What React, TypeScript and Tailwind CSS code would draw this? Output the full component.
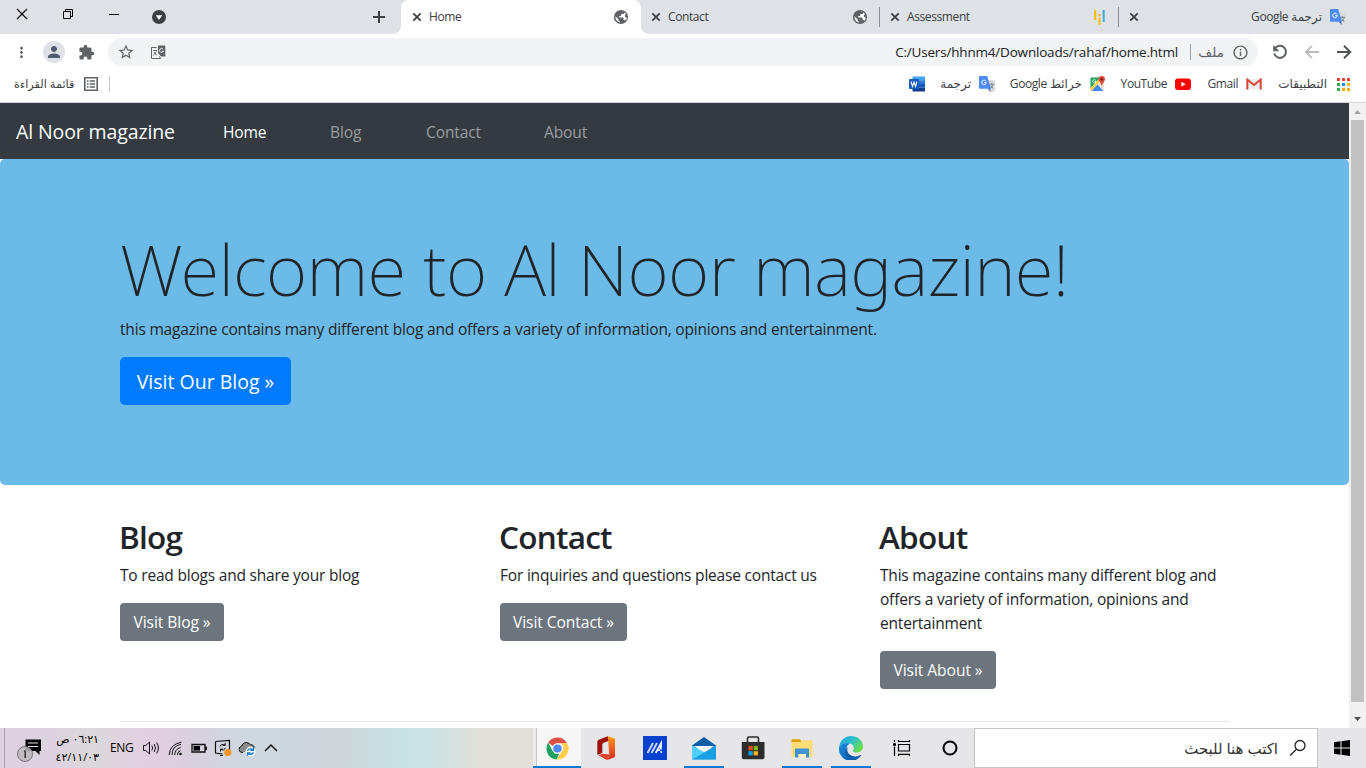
import type { ReactNode } from "react";
import { MdExtension, MdInfoOutline, MdMoreVert, MdPerson, MdStarBorder } from "react-icons/md";

/* ---------- small drawings ---------- */

const CloseX = () => (
  <svg width="10" height="10" viewBox="0 0 10 10" className="shrink-0">
    <path d="M1.3 1.3 8.7 8.7M8.7 1.3 1.3 8.7" stroke="#3c4043" strokeWidth="1.8" />
  </svg>
);

const Globe = () => (
  <svg width="16" height="16" viewBox="0 0 16 16" className="shrink-0">
    <circle cx="8" cy="8" r="7.100" fill="#5f6368" />
    <path
      d="M8.800 2.400c1 .1 1.900.4 2.700 1-.2 1.100-.9 1.600-2 1.700H8.300v1.200c0 .5-.3.800-.8.800H6.300v1.300h3.500c.5 0 .8.300.8.800v1.700h.8c.6 0 1.100.3 1.300.8.600-.8 1-1.800 1.100-2.800l-2-1.500.3-1.700 1-.6A5.600 5.600 0 0 0 8.800 2.400zM2.400 7.300l3.300 3.200v.7c0 .7.600 1.300 1.300 1.300v1a5.600 5.600 0 0 1-4.600-6.200z"
      fill="#fff"
    />
  </svg>
);

const TranslateIcon = () => (
  <svg width="16" height="16" viewBox="0 0 16 16" className="shrink-0">
    <path d="M6 4h9.2c.5 0 .8.3.8.8v10.4c0 .5-.3.8-.8.8H10z" fill="#dcdcdc" />
    <path d="M8.6 12.6 12 16l-1.2-4z" fill="#3a5bc7" />
    <path d="M.8 0h7.4L12 12.8H.8c-.5 0-.8-.3-.8-.8V.8C0 .3.300 0 .8 0z" fill="#4c8bf5" />
    <path d="M7 5.300A2.300 2.300 0 1 0 7.300 6.700H5.200" stroke="#fff" strokeWidth="1" fill="none" />
    <path d="M10.800 8.300h4.200M12.800 7.200v1.200M14.200 8.500c-.3 1.700-1.500 3-2.600 3.700M11.700 9.500c.5 1.300 1.600 2.400 2.700 3" stroke="#6b7d86" strokeWidth=".9" fill="none" />
  </svg>
);

const WordIcon = () => (
  <svg width="16" height="16" viewBox="0 0 16 16" className="shrink-0">
    <path d="M4 .5h11.500a.5.5 0 0 1 .5.5v3.500H3.500V1z" fill="#41a5ee" />
    <path d="M3.500 4.300H16V8H3.500z" fill="#2b7cd3" />
    <path d="M3.500 8H16v3.700H3.500z" fill="#185abd" />
    <path d="M3.500 11.700H16V15a.5.5 0 0 1-.5.5H4a.5.5 0 0 1-.5-.5z" fill="#103f91" />
    <rect y="3" width="10" height="10" rx=".8" fill="#185abd" />
    <path d="m2 5.500 1.500 5L5 6l1.500 4.500 1.500-5" stroke="#fff" strokeWidth="1.100" fill="none" />
  </svg>
);

const MapsIcon = () => (
  <svg width="16" height="16" viewBox="0 0 16 16" className="shrink-0">
    <rect x=".5" y="1.500" width="13.500" height="13.500" rx="1" fill="#e8e4da" />
    <path d="M.5 2.500a1 1 0 0 1 1-1H11L.5 12.500z" fill="#1fa463" />
    <path d="m1.500 15 6-6.500 5.800 6.500z" fill="#4285f4" />
    <path d="m.5 12 9-10 1.500 2-9.500 11c-.6 0-1-.4-1-1z" fill="#fcd04b" />
    <path d="M5.800 4.500A1.700 1.700 0 1 0 6 5.500H4.500" stroke="#fff" strokeWidth=".8" fill="none" />
    <path d="M11.800 0a3.200 3.200 0 0 1 3.200 3.200c0 2.300-2.700 3.600-3.200 7.300-.5-3.700-3.200-5-3.200-7.300A3.200 3.200 0 0 1 11.800 0z" fill="#dd4b3e" />
    <circle cx="11.800" cy="3.200" r="1.200" fill="#811411" />
  </svg>
);

const YouTubeIcon = () => (
  <svg width="16" height="16" viewBox="0 0 16 16" className="shrink-0">
    <rect y="2.500" width="16" height="11.500" rx="3" fill="#f00" />
    <path d="m6.400 5.800 4.200 2.450-4.200 2.450z" fill="#fff" />
  </svg>
);

const GmailIcon = () => (
  <svg width="16" height="16" viewBox="0 0 16 16" className="shrink-0">
    <path d="M1 3h14v10.500H1z" fill="#eee" />
    <path d="M1.300 13.500V3.500L8 9l6.700-5.500v10" stroke="#db4437" strokeWidth="2" fill="none" />
  </svg>
);

const AppsGrid = () => {
  const colors = ["#ea4335", "#ea4335", "#ea4335", "#34a853", "#1a8cff", "#fbbc04", "#34a853", "#fbab04", "#fbab04"];
  return (
    <div className="ml-[2px] grid h-[13px] w-[13px] shrink-0 grid-cols-3 gap-[2px]">
      {colors.map((c, i) => (
        <span key={i} style={{ backgroundColor: c }} />
      ))}
    </div>
  );
};

const BarsIcon = () => (
  <svg width="11" height="16" viewBox="0 0 11 16" className="shrink-0">
    <path d="M1.200 1v10M5.500 8.500V16" stroke="#fbbc04" strokeWidth="2" />
    <path d="M5.500 5v2.200" stroke="#f9ab00" strokeWidth="2" />
    <path d="M9.700 1v12" stroke="#3aa9e0" strokeWidth="2" />
  </svg>
);

/* ---------- browser tab strip ---------- */

const tabText = "text-[12px] leading-[16px] tracking-[-0.033em] text-[#3c4043]";

function TabStrip() {
  return (
    <div className="flex h-[34px] bg-white">
      <div className="flex w-[401px] rounded-br-[8px] bg-[#dee1e6]">
        <svg width="401" height="34" viewBox="0 0 401 34">
          <path d="M17 9l10 10M27 9 17 19" stroke="#000" strokeWidth="1.100" />
          <path d="M63.500 11.500h7v7h-7zM65.500 11.500v-2h7v7h-2" stroke="#000" fill="none" />
          <path d="M109 14.500h10" stroke="#000" />
          <circle cx="159" cy="17" r="7" fill="#3c4043" />
          <path d="m155.800 15.200h6.400L159 20z" fill="#fff" />
          <path d="M373 17h12M379 11v12" stroke="#3c4043" strokeWidth="2" />
        </svg>
      </div>
      <div className="w-[240px] bg-[linear-gradient(#dee1e6_50%,white_50%)]">
        <div className="flex h-full items-center rounded-t-[8px] bg-white pr-[12px] pl-[11px]">
          <CloseX />
          <span className={`ml-[7px] flex-1 ${tabText}`}>Home</span>
          <Globe />
        </div>
      </div>
      <div className="flex flex-1 rounded-bl-[8px] bg-[#dee1e6]">
        <div className="flex w-[238px] items-center pr-[11px] pl-[10px]">
          <CloseX />
          <span className={`ml-[7px] flex-1 ${tabText}`}>Contact</span>
          <Globe />
        </div>
        <div className="my-[7px] w-px bg-[#8b8e93]" />
        <div className="flex w-[238px] items-center pr-[13px] pl-[10px]">
          <CloseX />
          <span className={`ml-[7px] flex-1 ${tabText}`}>Assessment</span>
          <BarsIcon />
        </div>
        <div className="my-[7px] w-px bg-[#8b8e93]" />
        <div className="flex w-[227px] items-center pl-[10px]">
          <CloseX />
          <span dir="rtl" className={`mr-[8px] flex-1 ${tabText}`}>
            ترجمة Google
          </span>
          <TranslateIcon />
        </div>
      </div>
    </div>
  );
}

/* ---------- toolbar ---------- */

function Toolbar() {
  return (
    <div className="flex h-[36px] items-center bg-white pr-[14px] pl-[13px] text-[#5f6368]">
      <MdMoreVert size={17} />
      <div className="ml-[13px] flex size-[22px] items-center justify-center rounded-full bg-[#dee1e6]">
        <MdPerson size={18} color="#4f5b70" />
      </div>
      <MdExtension size={17} className="ml-[13px]" />
      <div className="ml-[13px] flex h-[28px] w-[1150px] items-center rounded-full bg-[#f1f3f4] pr-[9px] pl-[9px]">
        <MdStarBorder size={18} />
        <svg width="16" height="16" viewBox="0 0 16 16" className="ml-[15px]">
          <path d="M6.500 3.500h-5v11h9l-1-2" fill="none" stroke="#5f6368" />
          <path d="M3.200 6.500h4M3.400 11.500l3.200-4M4 8l2.800 3.500" stroke="#5f6368" strokeWidth=".9" />
          <path d="M8 1.500h6.500a.8.800 0 0 1 .8.800V12.500H11L8 9z" fill="#5f6368" />
          <path d="M13 5.200a2 2 0 1 0 .3 2H11.800" stroke="#f1f3f4" fill="none" />
        </svg>
        <span className="flex-1 text-right text-[13.500px] leading-[18px] tracking-[-0.014em] text-[#202124]">
          C:/Users/hhnm4/Downloads/rahaf/home.html
        </span>
        <div className="ml-[12px] h-[16px] w-px bg-[#9aa0a6]" />
        <span className="mr-[8px] w-[33px] text-right text-[13.500px] leading-[18px]">ملف</span>
        <MdInfoOutline size={17} />
      </div>
      <svg width="16" height="16" viewBox="0 0 16 16" className="ml-[14px]" fill="none" stroke="#5f6368" strokeWidth="2">
        <path d="M3.200 4.200A6 6 0 1 1 2.200 9.500" />
        <path d="M1.200 1v6.200h6.200z" fill="#5f6368" stroke="none" />
      </svg>
      <svg width="16" height="16" viewBox="0 0 16 16" className="ml-[16px]" fill="none" stroke="#babcbe" strokeWidth="1.800">
        <path d="M15 8H2.500M8 1.800 1.800 8 8 14.200" />
      </svg>
      <svg width="16" height="16" viewBox="0 0 16 16" className="ml-[16px]" fill="none" stroke="#4f5357" strokeWidth="2">
        <path d="M1 8h12.500M8 1.800 14.200 8 8 14.200" />
      </svg>
    </div>
  );
}

/* ---------- bookmarks ---------- */

const Bookmark = ({ label, icon, width }: { label?: string; icon: ReactNode; width: string }) => (
  <div className={`flex items-center justify-end gap-2 ${width}`}>
    {label && (
      <span dir="auto" className="text-[12px] leading-[16px] tracking-[-0.035em] whitespace-nowrap text-[#3c4043]">
        {label}
      </span>
    )}
    {icon}
  </div>
);

function Bookmarks() {
  return (
    <div className="flex h-[33px] items-center justify-between border-b border-[#d3d5d8] bg-white pr-[16px] pb-[4px] pl-[14px]">
      <div className="flex items-center">
        <span className="w-[60px] text-[11.300px] leading-[16px] whitespace-nowrap text-[#3c4043]">قائمة القراءة</span>
        <svg width="14" height="14" viewBox="0 0 14 14" className="ml-[10px]">
          <path d="M.8.800h12.400v12.400H.8z" fill="none" stroke="#5f6368" strokeWidth="1.600" />
          <path d="M3 4h1.500M3 7h1.500M3 10h1.500M5.700 4H11M5.700 7H11M5.700 10H11" stroke="#5f6368" strokeWidth="1.300" />
        </svg>
        <div className="ml-[11px] h-[16px] w-px bg-[#c6c8cb]" />
      </div>
      <div className="flex items-center">
        <Bookmark icon={<WordIcon />} width="w-[16px]" />
        <Bookmark label="ترجمة" icon={<TranslateIcon />} width="w-[70px]" />
        <Bookmark label="خرائط Google" icon={<MapsIcon />} width="w-[111px]" />
        <Bookmark label="YouTube" icon={<YouTubeIcon />} width="w-[85px]" />
        <Bookmark label="Gmail" icon={<GmailIcon />} width="w-[71px]" />
        <Bookmark label="التطبيقات" icon={<AppsGrid />} width="w-[88px]" />
      </div>
    </div>
  );
}

/* ---------- web page ---------- */

const cards = [
  { title: "Blog", text: "To read blogs and share your blog", button: "Visit Blog »", width: "w-[104px]" },
  {
    title: "Contact",
    text: "For inquiries and questions please contact us",
    button: "Visit Contact »",
    width: "w-[127px]",
  },
  {
    title: "About",
    text: "This magazine contains many different blog and offers a variety of information, opinions and entertainment",
    button: "Visit About »",
    width: "w-[116px]",
  },
];

function Page() {
  return (
    <div className="h-[625px] w-[1349px] overflow-hidden bg-white text-[#212529]">
      <nav className="flex h-[56px] items-center bg-[#343a40] pt-px pl-[16px] text-[15.600px] leading-[24px] tracking-[-0.010em] text-[#999c9f]">
        <span className="w-[207px] text-[19.500px] leading-[30px] tracking-[-0.006em] text-white">Al Noor magazine</span>
        <span className="w-[107px] text-white">Home</span>
        <span className="w-[96px]">Blog</span>
        <span className="w-[118px]">Contact</span>
        <span>About</span>
      </nav>
      <section className="h-[326px] rounded-[5px] bg-[#6cbae7] px-[120px] pt-[66.600px]">
        <h1 className="mb-[5px] font-['Noto_Sans'] text-[71px] leading-[86.400px] font-[250] tracking-[-0.010em] whitespace-nowrap">
          Welcome to Al Noor magazine!
        </h1>
        <p className="mb-4 text-[15.500px] leading-[24px] tracking-[-0.012em]">
          this magazine contains many different blog and offers a variety of information, opinions and entertainment.
        </p>
        <button className="h-[48px] w-[171px] rounded-[5px] bg-[#007bff] pt-px text-[19.500px] leading-[30px] text-white">
          Visit Our Blog »
        </button>
      </section>
      <section className="mx-[120px] mt-[32px] grid h-[205px] w-[1110px] grid-cols-3 gap-[30px] border-b border-[#e5e5e5]">
        {cards.map((c) => (
          <div key={c.title}>
            <h2 className="mb-[7px] -ml-px pt-px text-[31.500px] leading-[38.400px] font-[560] tracking-[-0.024em]">{c.title}</h2>
            <p className="mb-4 text-[15.500px] leading-[24px] tracking-[-0.013em]">{c.text}</p>
            <button
              className={`h-[38px] rounded-[4px] bg-[#6c757d] text-[15.600px] leading-[24px] tracking-[-0.004em] text-white ${c.width}`}
            >
              {c.button}
            </button>
          </div>
        ))}
      </section>
    </div>
  );
}

function Scrollbar() {
  return (
    <div className="flex h-[625px] w-[17px] flex-col items-center bg-[#f1f1f1]">
      <svg width="17" height="17" viewBox="0 0 17 17">
        <path d="M5 11h7L8.500 7z" fill="#a3a3a3" />
      </svg>
      <div className="h-[582px] w-[13px] bg-[#c1c1c1]" />
      <svg width="17" height="26" viewBox="0 0 17 26">
        <path d="M5 15h7L8.500 19z" fill="#505050" />
      </svg>
    </div>
  );
}

/* ---------- taskbar ---------- */

const ChromeLogo = () => (
  <svg width="23" height="23" viewBox="0 0 24 24">
    <path d="M12 .5a11.500 11.500 0 0 1 10 5.900H12a5.600 5.600 0 0 0-5 3L2.300 5.800A11.500 11.500 0 0 1 12 .5z" fill="#dd5144" />
    <path d="M22 6.400A11.500 11.500 0 0 1 11 23.500l5.700-8.500a5.600 5.600 0 0 0-1-8.600z" fill="#ffcd46" />
    <path d="M2.300 5.800 7.200 15a5.600 5.600 0 0 0 6.600 2.300L11 23.500A11.500 11.500 0 0 1 2.300 5.800z" fill="#1da261" />
    <circle cx="12" cy="12" r="5.300" fill="#f1f1f1" />
    <circle cx="12" cy="12" r="4.300" fill="#4c8bf5" />
  </svg>
);

const OfficeLogo = () => (
  <svg width="18" height="24" viewBox="0 0 18 24">
    <defs>
      <linearGradient id="of1" x1="0" y1="0" x2="0" y2="1">
        <stop offset="0" stopColor="#ff9a0a" />
        <stop offset=".4" stopColor="#f26a1b" />
        <stop offset="1" stopColor="#d9281c" />
      </linearGradient>
    </defs>
    <path d="M.3 6.500C.3 5 .8 4.200 2.300 3.500L10.800.3 12.300 4.800 6.800 6.800c-1 .4-1.500.9-1.500 2v8L1.800 18.600C.8 19.100.3 18.800.3 17.800z" fill="#9c1310" />
    <path d="M10.800.300 17 2.200c.7.200 1 .7 1 1.300v16.800c0 .6-.3 1-1 1.300l-6.200 2.200 1.500-5z" fill="url(#of1)" />
    <path d="M1.500 19.300 5.300 17.800l7 .8-1.500 5.200c-1 .1-1.600-.1-2.500-.6z" fill="#e0402a" />
  </svg>
);

const AsusLogo = () => (
  <svg width="24" height="24" viewBox="0 0 24 24">
    <path d="M0 0h24v24H0z" fill="#0540cf" />
    <path d="M4.500 17 10 7M8.500 17 14 7" stroke="#c9d7fa" strokeWidth="1.900" />
    <path d="M12.700 17 18 7.500v6M14.500 14h2.500" stroke="#e8efff" strokeWidth="1.900" fill="none" />
    <circle cx="18.200" cy="16" r="1" fill="#fff" />
  </svg>
);

const MailLogo = () => (
  <svg width="24" height="23" viewBox="0 0 24 23">
    <path d="M0 8.500 12 0l12 8.500V11H0z" fill="#0f5ea8" />
    <path d="M2 9h20l-10 7z" fill="#f5f5f5" />
    <path d="M0 8.500 24 22.500H0z" fill="#35b5f1" />
    <path d="M24 8.500V22.500H0z" fill="#1a9fe3" />
    <path d="M0 8.500 12 15.500 0 22.500z" fill="#50d0fb" />
  </svg>
);

const StoreLogo = () => (
  <svg width="24" height="24" viewBox="0 0 24 24">
    <path d="M6.500 7V2.200c0-.8.400-1.200 1.200-1.200h8.600c.8 0 1.200.4 1.200 1.200V7" fill="none" stroke="#2a2a2a" strokeWidth="1.600" />
    <path d="M.8 6h22.700v15.500a1.800 1.800 0 0 1-1.800 1.800H2.600a1.800 1.800 0 0 1-1.800-1.800z" fill="#2d2d2d" />
    <path d="M7.500 10h4.200v4.200H7.500z" fill="#f25022" />
    <path d="M12.700 10h4.200v4.200h-4.200z" fill="#7fba00" />
    <path d="M7.500 15.200h4.200v4.200H7.500z" fill="#00a4ef" />
    <path d="M12.700 15.200h4.200v4.200h-4.200z" fill="#ffb900" />
  </svg>
);

const ExplorerLogo = () => (
  <svg width="22" height="19" viewBox="0 0 22 19">
    <path d="M.5 1.200c0-.6.300-.9.900-.9H9L10.800 3H.5z" fill="#e0a106" />
    <path d="M.5 3h9l1.700-1.700H21.500V18H.5z" fill="#ffdc74" />
    <path d="M4.700 9.500h12.500c.5 0 .8.300.8.800V18.500H15v-3.500H7.500v3.500H4v-8.200c0-.5.200-.8.700-.8z" fill="#3e92d8" />
    <path d="M7.500 15H15v3.500H7.500z" fill="#fff3c4" />
  </svg>
);

const EdgeLogo = () => (
  <svg width="24" height="24" viewBox="0 0 24 24">
    <defs>
      <linearGradient id="eg1" x1="0" y1="0" x2="1" y2=".6">
        <stop offset="0" stopColor="#1f9fdc" />
        <stop offset=".5" stopColor="#2bc0cf" />
        <stop offset="1" stopColor="#6ade4f" />
      </linearGradient>
      <linearGradient id="eg2" x1="0" y1="0" x2="1" y2="1">
        <stop offset="0" stopColor="#1b8fe0" />
        <stop offset="1" stopColor="#0d4f9e" />
      </linearGradient>
    </defs>
    <path d="M.3 10.500C1 4.500 6 0 12 0c7 0 12 5 12 10.500 0 3.600-2.700 6-6 6-2.500 0-4.200-1-4.200-1.800 0-.6 1-1 1-2.700C14.800 9.500 12.500 7 8.500 7 5 7 1.500 8.600.3 10.500z" fill="url(#eg1)" />
    <path d="M.2 10.800C2 8 5 7 8 7c1 0 2.500.3 3.500.8-2.500.2-3.800 2.300-3.800 5 0 4.200 3.600 7.700 8.300 7.700 2.500 0 4-.6 5.500-1.500.5-.3.900 0 .6.500A12 12 0 0 1 .2 10.800z" fill="url(#eg2)" />
    <path d="M9.500 11c-.8 1-1 2-1 3.200 0 3.800 3.400 6.300 7.500 6.300-1.500 1-4 1.500-5.500 1C5.500 20 4 14 9.500 11z" fill="#114a8b" opacity=".55" />
  </svg>
);

const AppCell = ({ children, running, width = "w-[49px]" }: { children: ReactNode; running?: boolean; width?: string }) => (
  <div className={`flex h-full flex-col items-center ${width}`}>
    <div className="flex h-[38px] items-center justify-center pt-[2px]">{children}</div>
    {running && <div className="h-[2px] w-[40px] bg-[#0a78d6]" />}
  </div>
);

const TrayIcon = ({ children }: { children: ReactNode }) => (
  <svg width="24" height="24" viewBox="0 0 24 24" fill="none" stroke="#111" className="shrink-0">
    {children}
  </svg>
);

function Taskbar() {
  return (
    <div className="flex h-[40px] bg-[#e6e6e8]">
      <div className="flex w-[533px] items-center bg-[linear-gradient(90deg,#ddd0df_0px,#ddd2df_45px,#dcd8dc_95px,#e3cfe2_150px,#d9d0dd_190px,#cfd8e1_240px,#ccd8de_285px,#cfd6d9_340px,#c8e2e4_400px,#cbe2e3_430px,#e1dfd8_480px,#e3dfda_533px)]">
        <div className="h-full w-[5px] border-r border-[#a9a3ab]" />
        <div className="w-[52px] pl-[11px]">
          <svg width="30" height="30" viewBox="0 0 30 30">
            <path d="M9.500 6.500H25V18H23.500v4l-4-4h-10z" fill="#000" />
            <path d="M12 10h10M12 13.500h10" stroke="#e6dde8" strokeWidth="1.200" />
            <circle cx="9" cy="21" r="7.500" fill="#bdb7bd" fillOpacity=".85" stroke="#77727a" />
            <path d="M8.200 17.500l1 1.200v6.300" stroke="#111" strokeWidth="1.200" fill="none" />
          </svg>
        </div>
        <div dir="rtl" className="flex w-[42px] flex-col text-right text-[11px] leading-[18px] whitespace-nowrap text-black">
          <span className="tracking-[-0.045em]">٠٦:٢١ ص</span>
          <span className="tracking-[-0.070em]">٤٢/١١/٠٣</span>
        </div>
        <span className="ml-[11px] w-[29px] text-[12px] leading-[16px] tracking-[-0.030em] text-black">ENG</span>
        <TrayIcon>
          <path d="M4.500 9.500h2.300L10.500 6v12l-3.700-3.500H4.500z" />
          <path d="M12.800 9.500q1.700 2.500 0 5M15.200 8q2.700 4 0 8M17.600 6.500q3.700 5.500 0 11" />
        </TrayIcon>
        <TrayIcon>
          <circle cx="17.500" cy="18" r="1.300" fill="#111" stroke="none" />
          <path d="M14.500 19q-.5-3.200 3-4.300M11.700 19q0-5.800 6-7.500M9 19q-.3-8.500 9-10.800M6.200 19Q6.200 9 18.500 6" />
        </TrayIcon>
        <TrayIcon>
          <path d="M5 8.500h13v7.500H5zM19.300 10.500v3.500" strokeWidth="1.300" />
          <path d="M6.500 10H13v4.600H6.500z" fill="#000" stroke="none" />
        </TrayIcon>
        <TrayIcon>
          <path d="M4.500 5.500l14-1v11M4.500 5.500V17l7 1M9 19.500h3" strokeWidth="1.200" />
          <path d="M9 10.500q1-3 5-1.500m.2-2v2.500h-2.500M14.200 12q-1 3-4.500 1.500m-.2 2V13h2.300" />
          <circle cx="16.800" cy="16.500" r="3.600" fill="#f7941d" stroke="none" />
        </TrayIcon>
        <TrayIcon>
          <path d="M8 16.500H7a3.200 3.200 0 0 1-.5-6.300C7.500 6.500 12.500 5 15.500 8.700c2.500-.2 3.700 1.600 3.700 3.300" fill="#8a8a8a" />
          <circle cx="15.500" cy="15.500" r="5" fill="#fff" stroke="none" />
          <path d="M12.500 14.800q1-2.800 5-1.500m.9-2v2.900h-2.900M18.500 16.300q-1 2.800-5 1.500m-.9 2v-2.900h2.900" stroke="#1976c9" strokeWidth="1.400" />
        </TrayIcon>
        <TrayIcon>
          <path d="m6 15 6-6 6 6" strokeWidth="1.500" />
        </TrayIcon>
      </div>
      <div className="flex h-full w-[48px] flex-col">
        <div className="flex h-[38px] border-l-[3px] border-[#ececec]">
          <div className="flex flex-1 items-center justify-center border-l border-[#c8c8c8] bg-[#f6f6f6] pt-[2px] pr-[4px]">
            <ChromeLogo />
          </div>
        </div>
        <div className="h-[2px] bg-[#0a78d6]" />
      </div>
      <AppCell>
        <OfficeLogo />
      </AppCell>
      <AppCell>
        <AsusLogo />
      </AppCell>
      <AppCell running>
        <MailLogo />
      </AppCell>
      <AppCell>
        <StoreLogo />
      </AppCell>
      <AppCell running>
        <ExplorerLogo />
      </AppCell>
      <AppCell running>
        <EdgeLogo />
      </AppCell>
      <AppCell width="w-[50px]">
        <svg width="18" height="16" viewBox="0 0 18 16" fill="none" stroke="#000" className="ml-[3px]">
          <path d="M1.500 0v2M1.500 6.500V16" strokeWidth="1.200" />
          <path d="M0 4.500h3" strokeWidth="2.500" />
          <path d="M5 4.500h11.500V11H5.500V4.500M5.500 0v1.500h11V0M5.500 16v-1.700h11V16" strokeWidth="1.200" />
        </svg>
      </AppCell>
      <AppCell>
        <svg width="18" height="18" viewBox="0 0 18 18">
          <circle cx="9" cy="9" r="6.500" fill="none" stroke="#000" strokeWidth="2" />
        </svg>
      </AppCell>
      <div className="flex h-full w-[344px] items-center justify-end border border-[#c6c6c6] bg-white pr-[10px]">
        <span className="text-[15px] leading-[20px] text-[#333]">اكتب هنا للبحث</span>
        <svg width="18" height="18" viewBox="0 0 18 18" className="ml-[11px]" fill="none" stroke="#222" strokeWidth="1.300">
          <circle cx="11" cy="6.500" r="5" />
          <path d="M7.500 10.200 1 16.500" />
        </svg>
      </div>
      <div className="flex h-full flex-1 items-center justify-center">
        <svg width="16" height="16" viewBox="0 0 16 16">
          <path d="M0 2.200 6.500 1.300v6.200H0zM7.500 1.200 16 0v7.500H7.500zM0 8.500h6.500v6.200L0 13.800zM7.500 8.500H16V16l-8.500-1.200z" />
        </svg>
      </div>
    </div>
  );
}

export default function App() {
  return (
    <div className="h-[768px] w-[1366px] overflow-hidden bg-white font-['Open_Sans','DejaVu_Sans',sans-serif]">
      <TabStrip />
      <Toolbar />
      <Bookmarks />
      <div className="flex h-[625px]">
        <Page />
        <Scrollbar />
      </div>
      <Taskbar />
    </div>
  );
}
